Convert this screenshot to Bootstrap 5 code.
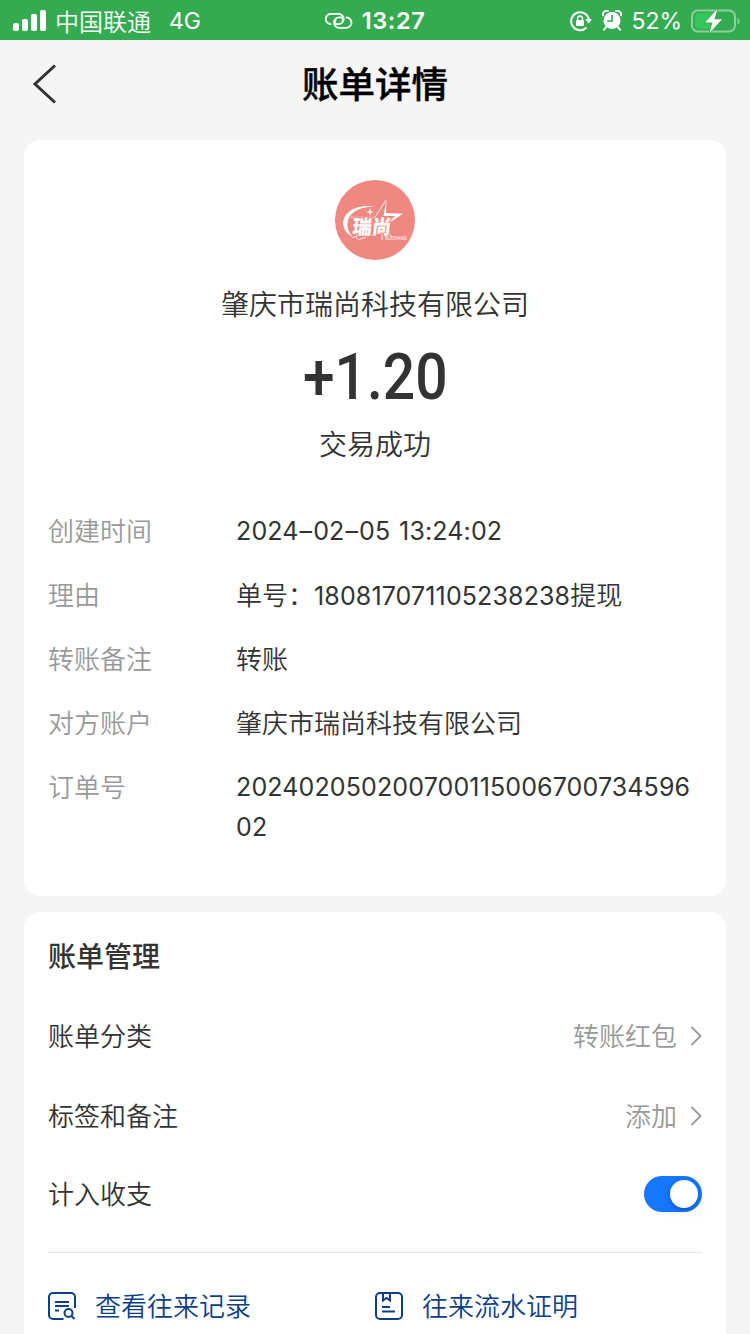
<!DOCTYPE html>
<html lang="zh-CN">
<head>
<meta charset="utf-8">
<meta name="viewport" content="width=device-width, initial-scale=1">
<title>账单详情</title>
<link href="https://cdn.jsdelivr.net/npm/bootstrap@5.3.0/dist/css/bootstrap.min.css" rel="stylesheet">
<style>
  body { font-family: "Noto Sans CJK SC", sans-serif; font-weight: 350; font-size: 26px; line-height: 40px; color: #333; background: #f5f5f5; height: 1334px; overflow: hidden; }
  svg { display: block; flex: none; }
  .status { height: 40px; background: #34ab51; line-height: 40px; font-size: 24px; color: #fff; display: grid; grid-template-columns: 1fr auto 1fr; }
  .latin { font-family: Inter, sans-serif; font-weight: 400; }
  .clock { font-weight: 600; font-size: 23.5px; letter-spacing: .6px; }
  .topbar { height: 100px; padding: 0 30px 15px; display: grid; grid-template-columns: 1fr auto 1fr; }
  .topbar h1 { font-size: 36.5px; font-weight: 500; line-height: 48px; color: #000; -webkit-text-stroke: .4px #000; }
  .panel { border: 0; border-radius: 16px; margin: 0 24px 16px; padding: 0 24px; color: inherit; }
  .bill { height: 756px; padding-top: 40px; }
  .payee { font-size: 28px; margin-top: 23px; }
  .amount { font-family: Roboto, sans-serif; font-weight: 500; font-size: 64px; line-height: 72px; margin-top: 19px; transform: scaleX(.89); }
  .state { font-size: 28px; margin-top: 9px; }
  .details { margin-top: 47px; display: grid; grid-template-columns: 188px 1fr; grid-auto-rows: minmax(40px, auto); row-gap: 24px; }
  .details dt { font-weight: inherit; color: #999; }
  .details dd { word-break: break-all; padding-right: 4px; }
  .details .latin { font-size: 25px; letter-spacing: .13px; }
  .details dd > .latin { line-height: 1; }
  .details dd.latin { padding-top: 1px; margin-bottom: -1px !important; }
  .stamp { word-spacing: 1.6px; }
  .stamp i { font-style: normal; padding: 0 1px; }
  .manage { height: 460px; padding-top: 23px; }
  .manage h2 { font-size: 28px; font-weight: 500; line-height: 40px; margin-bottom: 21px; }
  .setting { height: 80px; flex: none; }
  .setting:nth-of-type(3) { height: 76px; }
  .caption { padding-bottom: 2px; }
  .hint { color: #999; }
  .hint .caption { padding-bottom: 3px; }
  .hint svg { margin-left: 13px; }
  .toggle.form-check-input { width: 58px; height: 36px; margin: 0; border: 0; border-radius: 18px; background: #1677ff; position: relative; }
  .toggle.form-check-input::after { content: ""; position: absolute; right: 4px; top: 4px; width: 28px; height: 28px; border-radius: 50%; background: #fff; box-shadow: 0 2px 4px rgba(0,0,0,.25), 0 4px 24px rgba(0,0,0,.06); }
  .links { border-top: 1px solid #e5e5e5; color: #0e3f86; padding-top: 32px; margin-top: 20px; }
  .links span { margin-left: 19px; }
</style>
</head>
<body>
<header class="status align-items-center">
  <div class="d-flex align-items-center">
    <svg width="34" height="22" style="margin-left:13px" fill="#fff"><rect y="13" width="6" height="8" rx="2"/><rect x="9" y="9" width="6" height="12" rx="2"/><rect x="18" y="4" width="6" height="17" rx="2"/><rect x="27" width="6" height="21" rx="2"/></svg>
    <span class="ms-2">中国联通</span><span class="latin" style="margin-left:18px;font-size:23px;padding-top:1px">4G</span>
  </div>
  <div class="d-flex align-items-center">
    <svg width="28" height="18" viewBox="0 0 28 18" fill="none" stroke="#fff" stroke-width="1.8" stroke-linecap="round"><path d="M5.6 12.2A5.2 5.2 0 0 1 6.4 1.8H13.500A5.2 5.2 0 0 1 13.500 12.2H11.600A2.200 2.200 0 0 1 10.500 8.500M21.500 5.4A5.2 5.2 0 0 1 21 15.8H14.200A5.2 5.2 0 0 1 14.200 5.4H16A2.400 2.400 0 0 1 17.500 9"/></svg>
    <span class="latin clock" style="margin-left:9px;padding-top:1px">13:27</span>
  </div>
  <div class="d-flex align-items-center justify-content-end">
    <svg width="22" height="22" viewBox="0 0 22 22" fill="none" stroke="#fff" stroke-width="2"><path d="M16.6 17.5A9 9 0 1 1 18.9 9"/><path d="M15.2 9h6.8l-3.4 4.6z" fill="#fff" stroke="none"/><rect x="6" y="10" width="8" height="6" rx="1" fill="#fff" stroke="none"/><path d="M7.6 10V8.3a2.4 2.4 0 0 1 4.8 0V10" stroke-width="1.5"/></svg>
    <svg width="20" height="21" viewBox="0 0 20 21" style="margin-left:10px"><circle cx="10" cy="10.5" r="8.5" fill="#fff"/><path d="M.9 5.2A4 4 0 0 1 5.8.9M19.1 5.2A4 4 0 0 0 14.2.9M4.1 17l-2.1 2.7M15.9 17l2.1 2.7" fill="none" stroke="#fff" stroke-width="2" stroke-linecap="round"/><path d="M10 5v6H5.2" fill="none" stroke="#34ab51" stroke-width="1.6"/></svg>
    <span class="latin" style="margin-left:9px;font-size:23px;padding-top:1px">52%</span>
    <svg width="50" height="26" viewBox="0 0 50 26" style="margin:0 9px 0 9px"><rect x="1" y="2.5" width="43" height="21" rx="6" fill="none" stroke="#8fcf9f" stroke-width="2"/><path d="M8 5h15v16H8a4 4 0 0 1-4-4V9a4 4 0 0 1 4-4z" fill="#35c759"/><path d="M46.5 9.5a4 4 0 0 1 0 7z" fill="#8fcf9f"/><path d="M26.500.8L14 14.500h7.4L18.500 25 31 11.300h-7.6z" fill="#fff" stroke="#34ab51" stroke-width="1.5" paint-order="stroke"/></svg>
  </div>
</header>

<nav class="topbar align-items-center">
  <svg width="28" height="40" viewBox="0 0 28 40" fill="none" stroke="#333" stroke-width="3" style="margin-top:3px"><path d="M25 1.500L5 20l20 18.500"/></svg>
  <h1 class="m-0">账单详情</h1>
</nav>

<main>
  <section class="card panel bill">
    <div class="d-flex flex-column align-items-center">
      <svg width="80" height="80" viewBox="0 0 80 80">
        <circle cx="40" cy="40" r="40" fill="#ef8880"/>
        <path d="M39 26.500C25 24 8.500 30 8.200 43c0 7 4.300 11.500 9.800 14-3.500-3.500-6-8-5.500-13.500C13.500 32 25 27 39 26.500z" fill="#fff"/>
        <path d="M16 37.300H40L51 20M51 50l6 7M17 58l9-4M22 59l-.5-6M38 54l-15 6M47 60V53" fill="none" stroke="#fff" stroke-width="1" opacity=".85"/>
        <path d="M51.500 19l-.5 14 17 .8L52.500 44 55 57l-3.500-12.500L60 36H48.500z" fill="#fff"/>
        <path d="M35 28l.8 3.200 3.200.8-3.200.8-.8 3.200-.8-3.200-3.200-.8 3.200-.8z" fill="#fff"/>
        <text x="17" y="54" font-family="Noto Sans CJK SC" font-weight="900" font-size="19.5" fill="#fff" stroke="#ef8880" stroke-width="2" paint-order="stroke" transform="translate(5.500 0) skewX(-6)">瑞尚</text>
        <text x="50" y="60" font-family="Inter" font-weight="400" font-size="5" textLength="22" lengthAdjust="spacingAndGlyphs" fill="#fff">RUISHANG</text>
      </svg>
      <div class="payee">肇庆市瑞尚科技有限公司</div>
      <div class="amount">+1.20</div>
      <div class="state">交易成功</div>
    </div>
    <dl class="details mb-0">
      <dt>创建时间</dt><dd class="m-0 latin stamp">2024<i>–</i>02<i>–</i>05 13:24:02</dd>
      <dt>理由</dt><dd class="m-0">单号：<span class="latin">180817071105238238</span>提现</dd>
      <dt>转账备注</dt><dd class="m-0">转账</dd>
      <dt>对方账户</dt><dd class="m-0">肇庆市瑞尚科技有限公司</dd>
      <dt>订单号</dt><dd class="m-0 latin">20240205020070011500670073459602</dd>
    </dl>
  </section>

  <section class="card panel manage">
    <h2>账单管理</h2>
    <div class="setting d-flex align-items-center justify-content-between">
      <span class="caption">账单分类</span>
      <span class="hint d-flex align-items-center"><span class="caption">转账红包</span><svg width="12" height="20" viewBox="0 0 12 20" fill="none" stroke="#999" stroke-width="1.8"><path d="M1.500 1L10.500 10l-9 9"/></svg></span>
    </div>
    <div class="setting d-flex align-items-center justify-content-between">
      <span class="caption">标签和备注</span>
      <span class="hint d-flex align-items-center"><span class="caption">添加</span><svg width="12" height="20" viewBox="0 0 12 20" fill="none" stroke="#999" stroke-width="1.8"><path d="M1.500 1L10.500 10l-9 9"/></svg></span>
    </div>
    <div class="setting d-flex align-items-center justify-content-between">
      <span class="caption">计入收支</span>
      <input class="form-check-input toggle" type="checkbox" role="switch" checked aria-label="计入收支">
    </div>
    <div class="links row g-0 flex-shrink-0">
      <div class="col-6 d-flex align-items-center">
        <svg width="28" height="28" viewBox="0 0 28 28" fill="none" stroke="#0e3f86" stroke-width="2"><path d="M15.500 27H5a4 4 0 0 1-4-4V5a4 4 0 0 1 4-4h18a4 4 0 0 1 4 4v11M7 10h14M7 14h14M7 18.500h4"/><circle cx="20.500" cy="21" r="4"/><path d="M23.500 24l3 3"/></svg>
        <span class="caption">查看往来记录</span>
      </div>
      <div class="col-6 d-flex align-items-center">
        <svg width="28" height="28" viewBox="0 0 28 28" fill="none" stroke="#0e3f86" stroke-width="2"><rect x="1" y="1" width="26" height="26" rx="4"/><path d="M8 1v7.500l3.500-2.500L15 8.500V1M7 15h8M7 19.500h13"/></svg>
        <span class="caption">往来流水证明</span>
      </div>
    </div>
  </section>
</main>
<script src="https://cdn.jsdelivr.net/npm/bootstrap@5.3.0/dist/js/bootstrap.bundle.min.js"></script>
</body>
</html>
